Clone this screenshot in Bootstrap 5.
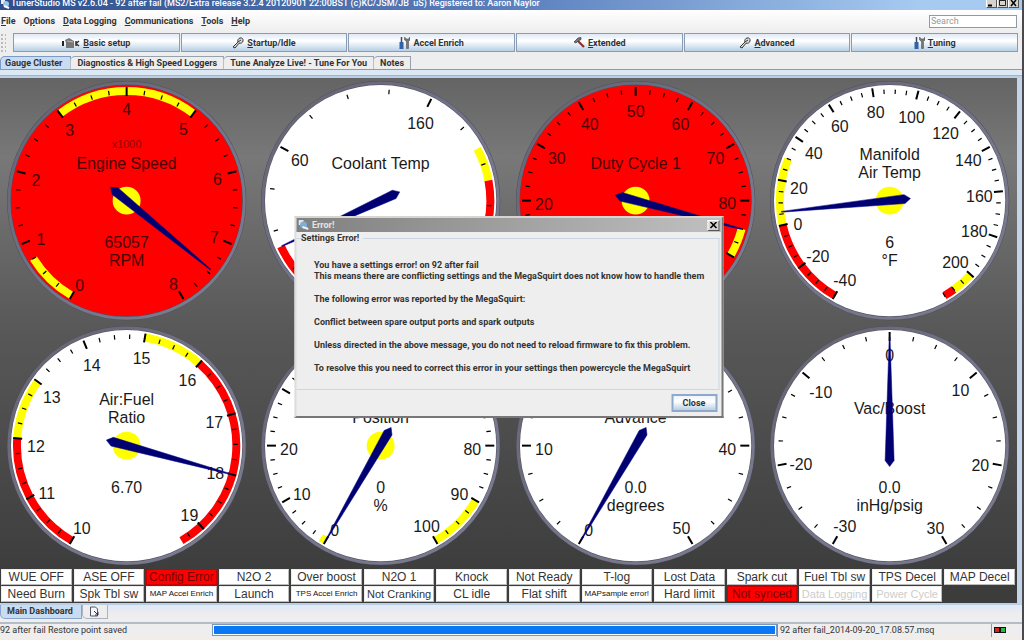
<!DOCTYPE html>
<html lang="en">
<head>
<meta charset="utf-8">
<meta name="viewport" content="width=device-width, initial-scale=1">
<title>TunerStudio MS</title>
<link href="https://cdn.jsdelivr.net/npm/bootstrap@5.3.0/dist/css/bootstrap.min.css" rel="stylesheet">
<style>
body{font:700 9px/12px Roboto,"Liberation Sans",sans-serif;color:#333;background:#eee}
button,input{font:inherit;color:inherit}
.window{min-height:100vh;border-right:2px solid #4a4a4e}
.title-bar{height:10px;background:linear-gradient(90deg,#2f4f8c,#5b7fbd 50%,#a6caf0 90%);color:#fff;padding-right:3px}
.title-bar .caption{font-weight:500;line-height:10px;margin-top:-2px;white-space:pre}
.win-btn{width:11px;height:8px;background:#d6d3ce;border:1px solid #555;border-top:0;border-left-color:#fff;padding:0;line-height:0}
.win-btn svg{display:block;margin:auto}
.menu-bar{height:22px;background:linear-gradient(#fff,#eee);padding:0 5px 0 1px}
.menu-bar a{color:#333;text-decoration:none;margin-right:8px}
.search{width:88px;height:13px;border:1px solid #8f9aa5;background:#fff;padding:0 1px;font-weight:400}
.search::placeholder{color:#999;opacity:1}
.tool-bar{height:22px;padding:1px 4px 2px 0;gap:1px}
.grip{width:12px;background:radial-gradient(#bbb 1px,transparent 1px) 0 0/4px 4px;background-clip:content-box;padding-right:6px}
.tool{height:19px;border:1px solid #8a9bb2;background:linear-gradient(#dfe9f4,#fff 40%,#f4f8fc 50%,#b8cfe5);padding:0;gap:3px}
.tab-row{height:16px;padding-top:2px;border-bottom:1px solid #8a9bb2}
.tab-row button{border:1px solid #98a2ad;border-bottom:0;border-left-color:#b9c0c8;background:#eee;padding:0 6px;border-top-left-radius:5px;height:13px;line-height:12px;margin-left:-1px}
.tab-row button.chosen{background:#c8ddf2;border-color:#7a9ac8;padding:0 8px 0 4px;margin-left:0}
.pane-edge{height:8px;background:linear-gradient(#dde8f5 0 5px,#9fb4cf 5px 6px,#b8cfe5 6px)}
.pane{border-right:5px solid #c4d4e8;border-bottom:2px solid #b8cfe5}
.scene{background:linear-gradient(#646464,#787878 15%,#585858 48%,#3c3c3c 96%)}
.gauge{display:block;width:25%}
.gauge text{font:400 16px "Liberation Sans",sans-serif;text-anchor:middle;fill:#1a1a1a}
.gauge.alarm text{fill:#4a0000}
.gauge text.scale-note{font-size:11px;fill:#9b0000}
.lamps{display:grid;grid-template-columns:repeat(14,1fr);gap:1px 2px;padding:0 2px 1px 1px}
.lamp{height:16px;border:1px solid #ddd;border-color:#eee #bbb #bbb #eee;background:#fff;font:400 12px/14px "Liberation Sans",sans-serif;text-align:center;white-space:nowrap;overflow:hidden;min-width:0}
.lamp.mid{font-size:11px}
.lamp.tiny{font-size:8px;color:#111}
.lamp.on{background:#f00;border-color:#c00;color:#7a0000}
.lamp.off{color:#ccc}
.dialog{position:absolute;left:50%;top:138px;width:429px;transform:translateX(-50%);background:#eee;border:2px solid #d8d5d0;border-right-color:#777;border-bottom-color:#777;border-left-color:#ddd}
.dialog-title{height:14px;background:linear-gradient(90deg,#808080,#c0c0c0);color:#e4e4e4;padding:0 2px 0 2px}
.dialog-title .win-btn{width:12px;height:11px;border-top:1px solid #fff}
.dialog fieldset{border:1px solid #ccd6e2;border-left:0;margin:0 2px 0 0;padding:16px 4px 15px 18px}
.dialog legend{float:none;width:auto;font:inherit;margin:0 0 0 -13px;padding:0 3px 0 0;line-height:12px}
.dialog p{margin:0 0 12px;line-height:11px}
.close-btn{width:46px;height:18px;border:2px solid #8fa9cc;background:linear-gradient(#eef4fa,#fff 40%,#b8cfe5);padding:0;line-height:12px}
.foot-tabs{height:17px;background:linear-gradient(#dfe9f6,#eee 60%)}
.foot-tabs button{height:14px;border:1px solid #aab4c0;border-top:0;background:#eee;border-bottom-left-radius:5px;padding:0 8px 0 6px}
.foot-tabs button.chosen{background:#c8ddf2;border-color:#8aa4cc}
.status{height:15px;border-top:2px solid #b4bcc6;font-weight:400;line-height:12px}
.status .msg{flex:0 0 212px}
.status .bar{height:12px;border:1px solid #7a96b8;border-radius:0;background:#fff;padding:1px}
.status .bar .progress-bar{background:#0a78f5}
.status .file{flex:0 0 214px;border-left:1px solid #888;padding-left:2px}
.status .led{flex:0 0 31px;border-left:1px solid #999;padding-left:2px}
.below{height:3px;background:#f2eee6}
</style>
</head>
<body>
<div class="window d-flex flex-column">
  <header class="title-bar d-flex align-items-start">
    <svg width="11" height="9" viewBox="0 0 11 9" aria-hidden="true"><rect x="1" width="4" height="4" fill="#e8edf4"/><circle cx="6" cy="4" r="3" fill="#9fc4e8"/><path d="M4 6l5 2" stroke="#fff" stroke-width="2"/></svg>
    <span class="caption flex-grow-1">TunerStudio MS v2.6.04 - 92 after fail (MS2/Extra release 3.2.4 20120901 22:00BST (c)KC/JSM/JB  uS) Registered to: Aaron Naylor</span>
    <button class="win-btn" aria-label="Minimize"><svg width="7" height="7"><path d="M0 5.500h4" stroke="#000" stroke-width="2"/></svg></button>
    <button class="win-btn" aria-label="Maximize"><svg width="7" height="7"><path d="M.5 0v5.500h6V0M0 .5h7" stroke="#222" fill="none"/></svg></button>
    <button class="win-btn" aria-label="Close window"><svg width="7" height="7"><path d="M1 0l5 6M6 0L1 6" stroke="#000" stroke-width="1.500"/></svg></button>
  </header>
  <nav class="menu-bar d-flex align-items-center">
    <a href="#"><u>F</u>ile</a><a href="#">O<u>p</u>tions</a><a href="#"><u>D</u>ata Logging</a><a href="#"><u>C</u>ommunications</a><a href="#"><u>T</u>ools</a><a href="#"><u>H</u>elp</a>
    <input class="search ms-auto" type="text" placeholder="Search" aria-label="Search">
  </nav>
  <div class="tool-bar d-flex">
    <span class="grip flex-shrink-0"></span>
    <button class="tool col d-flex align-items-center justify-content-center"><svg width="18" height="12" viewBox="0 0 18 12" aria-hidden="true"><path d="M1 4v5" stroke="#222" stroke-width="2"/><path d="M3 3l4-2 5 3v7H4V6z" fill="#777"/><path d="M5 4l6 1" stroke="#bbb"/><path d="M14 4v5M17 4l-3 2.500 3 2.500" stroke="#333" stroke-width="1.500" fill="none"/></svg><span><u>B</u>asic setup</span></button>
    <button class="tool col d-flex align-items-center justify-content-center"><svg width="12" height="12" viewBox="0 0 12 12" aria-hidden="true"><path d="M1 10l5-5a3 3 0 0 1 2-4c2-.6 3.500 1 3 3-.5 2-2 2.500-4 2.200L3 11z" fill="#ddd" stroke="#333"/><path d="M6 5l3-2" stroke="#333"/></svg><span><u>S</u>tartup/Idle</span></button>
    <button class="tool col d-flex align-items-center justify-content-center"><svg width="11" height="12" viewBox="0 0 11 12" aria-hidden="true"><path d="M2.500 0v5" stroke="#445" stroke-width="1.500"/><path d="M.5 5h4v7h-4z" fill="#2f62a8"/><path d="M5.500 0v3l2 1.500v7h2v-7l1.500-1.500V0L9.500 2h-2z" fill="#777" stroke="#444" stroke-width=".5"/></svg><span>Accel Enrich</span></button>
    <button class="tool col d-flex align-items-center justify-content-center"><svg width="12" height="12" viewBox="0 0 12 12" aria-hidden="true"><path d="M5 4l6 6" stroke="#8c2f2a" stroke-width="2.200"/><path d="M1 5l4-4 3-.5v2L5 4 3 6z" fill="#778" stroke="#333" stroke-width=".7"/></svg><span><u>E</u>xtended</span></button>
    <button class="tool col d-flex align-items-center justify-content-center"><svg width="12" height="12" viewBox="0 0 12 12" aria-hidden="true"><path d="M1 10l5-5a3 3 0 0 1 2-4c2-.6 3.500 1 3 3-.5 2-2 2.500-4 2.200L3 11z" fill="#ddd" stroke="#333"/><path d="M6 5l3-2" stroke="#333"/></svg><span><u>A</u>dvanced</span></button>
    <button class="tool col d-flex align-items-center justify-content-center"><svg width="11" height="12" viewBox="0 0 11 12" aria-hidden="true"><path d="M2.500 0v5" stroke="#445" stroke-width="1.500"/><path d="M.5 5h4v7h-4z" fill="#2f62a8"/><path d="M5.500 0v3l2 1.500v7h2v-7l1.500-1.500V0L9.500 2h-2z" fill="#777" stroke="#444" stroke-width=".5"/></svg><span><u>T</u>uning</span></button>
  </div>
  <div class="tab-row d-flex align-items-end">
    <button class="chosen">Gauge Cluster</button><button>Diagnostics &amp; High Speed Loggers</button><button>Tune Analyze Live! - Tune For You</button><button>Notes</button>
  </div>
  <div class="pane-edge"></div>
  <main class="pane position-relative">
    <div class="scene">
      <div id="gauges" class="d-flex flex-wrap"></div>
      <div class="lamps">
        <div class="lamp">WUE OFF</div><div class="lamp">ASE OFF</div><div class="lamp on">Config Error</div><div class="lamp">N2O 2</div><div class="lamp">Over boost</div><div class="lamp">N2O 1</div><div class="lamp">Knock</div><div class="lamp">Not Ready</div><div class="lamp">T-log</div><div class="lamp">Lost Data</div><div class="lamp">Spark cut</div><div class="lamp">Fuel Tbl sw</div><div class="lamp">TPS Decel</div><div class="lamp">MAP Decel</div>
        <div class="lamp">Need Burn</div><div class="lamp">Spk Tbl sw</div><div class="lamp tiny">MAP Accel Enrich</div><div class="lamp">Launch</div><div class="lamp tiny">TPS Accel Enrich</div><div class="lamp mid">Not Cranking</div><div class="lamp">CL idle</div><div class="lamp">Flat shift</div><div class="lamp tiny">MAPsample error!</div><div class="lamp">Hard limit</div><div class="lamp on">Not synced</div><div class="lamp mid off">Data Logging</div><div class="lamp mid off">Power Cycle</div>
      </div>
    </div>
    <section class="dialog" role="dialog" aria-label="Error!">
      <div class="dialog-title d-flex align-items-center">
        <svg class="me-1" width="10" height="10" viewBox="0 0 10 10" aria-hidden="true"><rect width="5" height="5" fill="#dfe8f2"/><circle cx="5" cy="5" r="3.500" fill="#7faed4"/><path d="M4 7l6 2" stroke="#eef" stroke-width="2"/></svg>
        <span class="flex-grow-1">Error!</span>
        <button class="win-btn" aria-label="Close dialog"><svg width="8" height="7"><path d="M1 0l6 6M7 0L1 6" stroke="#000" stroke-width="1.500"/></svg></button>
      </div>
      <fieldset>
        <legend>Settings Error!</legend>
        <p>You have a settings error! on 92 after fail<br>This means there are conflicting settings and the MegaSquirt does not know how to handle them</p>
        <p>The following error was reported by the MegaSquirt:</p>
        <p>Conflict between spare output ports and spark outputs</p>
        <p>Unless directed in the above message, you do not need to reload firmware to fix this problem.</p>
        <p class="mb-0">To resolve this you need to correct this error in your settings then powercycle the MegaSquirt</p>
      </fieldset>
      <div class="d-flex justify-content-end p-1"><button class="close-btn">Close</button></div>
    </section>
  </main>
  <div class="foot-tabs d-flex">
    <button class="chosen">Main Dashboard</button>
    <button aria-label="New dashboard"><svg width="10" height="11" viewBox="0 0 10 11" aria-hidden="true"><path d="M1.500 1h5l2 2v7h-7z" fill="#f6f6fb" stroke="#556"/><path d="M5 5l4 4M9 6v3H6" stroke="#334" fill="none"/></svg></button>
  </div>
  <footer class="status d-flex">
    <span class="msg">92 after fail Restore point saved</span>
    <div class="progress bar flex-grow-1" role="progressbar" aria-label="Progress" aria-valuenow="100" aria-valuemin="0" aria-valuemax="100"><div class="progress-bar w-100"></div></div>
    <span class="file">92 after fail_2014-09-20_17.08.57.msq</span>
    <span class="led"><svg width="12" height="6" viewBox="0 0 12 6" aria-hidden="true"><rect width="12" height="6" fill="#111"/><rect x="1" y="1" width="4" height="4" fill="#d22"/><rect x="7" y="1" width="4" height="4" fill="#2b4"/></svg></span>
  </footer>
  <div class="below flex-grow-1"></div>
</div>
<script src="https://cdn.jsdelivr.net/npm/bootstrap@5.3.0/dist/js/bootstrap.bundle.min.js"></script>
<script>
// Each gauge sweeps 300 degrees clockwise; labels hold text and the offset from the centre.
const R = 'red', Y = 'yellow';
const gauges = [
  {name:['Engine Speed'], note:'x1000', alarm:true, hub:true, min:0, max:8, major:1, minor:.25, at:7.45, value:'65057', unit:'RPM',
   bands:[[0,.75,Y],[3,5,Y]],
   labels:[['0',-47,85],['1',-86,39],['2',-91,-21],['3',-57,-71],['4',0,-92],['5',57,-72],['6',91,-22],['7',88,37],['8',47,84]]},
  {name:['Coolant Temp'], min:-40, max:300, major:100, minor:25, at:0, bands:[[-40,0,R],[200,220,Y],[220,300,R]],
   labels:[['60',-81,-41],['160',40,-78]]},
  {name:['Duty Cycle 1'], alarm:true, hub:true, min:0, max:100, major:10, minor:2.5, at:85, bands:[[85,90,Y]],
   labels:[['20',-92,3],['30',-79,-43],['40',-46,-77],['50',0,-90],['60',45,-77],['70',80,-43],['80',92,2]]},
  {name:['Manifold','Air Temp'], hub:true, min:-40, max:215, major:20, minor:5, at:6, value:'6', unit:'°F',
   bands:[[-40,0,R],[0,30,Y],[200,210,Y],[210,215,R]],
   labels:[['-40',-45,80],['-20',-72,56],['0',-92,23],['20',-91,-13],['40',-76,-48],['60',-50,-75],['80',-14,-89],['100',22,-84],['120',56,-68],['140',79,-41],['160',90,-5],['180',85,30],['200',66,62]]},
  {name:['Air:Fuel','Ratio'], hub:true, min:10, max:19.4, major:1, minor:.25, at:18, value:'6.70',
   bands:[[10,12,R],[12,13,Y],[15,16,Y],[16,19.4,R]],
   labels:[['10',-45,83],['11',-80,48],['12',-91,0],['13',-75,-49],['14',-35,-81],['15',15,-88],['16',61,-66],['17',88,-24],['18',89,27],['19',63,70]]},
  {name:['','Position'], hub:true, min:0, max:100, major:10, minor:2.5, at:0, value:'0', unit:'%', bands:[[0,1,Y],[90,100,Y]],
   labels:[['0',-46,85],['10',-79,49],['20',-92,3],['80',92,3],['90',79,49],['100',46,81]]},
  {name:['','Advance'], min:0, max:50, major:10, minor:2.5, at:0, value:'0.0', unit:'degrees', bands:[],
   labels:[['0',-47,85],['10',-92,3],['40',92,3],['50',46,83]]},
  {name:['Vac/Boost'], min:-30, max:30, major:10, minor:2.5, at:0, value:'0.0', unit:'inHg/psig', bands:[],
   labels:[['-30',-45,81],['-20',-89,18],['-10',-69,-54],['0',0,-91],['10',71,-56],['20',91,19],['30',46,83]]}
];
function draw(g) {
  const deg = v => -150 + 300 * (v - g.min) / (g.max - g.min);
  const pt = (v, r) => { const a = deg(v) * Math.PI / 180; return (r * Math.sin(a)).toFixed(2) + ' ' + (-r * Math.cos(a)).toFixed(2); };
  const text = (s, x, y) => s ? `<text x="${x}" y="${y + 6}">${s}</text>` : '';
  let s = `<circle r="120" fill="#4f4f5c"/><circle r="118" fill="none" stroke="url(#rim)" stroke-width="3"/><circle r="116" fill="${g.alarm ? '#f00' : '#fff'}"/>`;
  for (const [a, b, c] of g.bands)
    s += `<path d="M${pt(a,110)}A110 110 0 0 1 ${pt(b,110)}" fill="none" stroke="${c}" stroke-width="8"/>`;
  const n = Math.floor((g.max - g.min) / g.minor + .001), every = Math.round(g.major / g.minor);
  for (let i = 0; i <= n; i++) {
    const v = g.min + i * g.minor, big = i % every === 0;
    s += `<path d="M${pt(v, big ? 105 : 107)}L${pt(v, big ? 114 : 111.5)}" stroke="#000" stroke-width="${big ? 2 : 1.2}"/>`;
  }
  if (g.hub) s += '<circle r="14" fill="#ff0"/>';
  for (const [t, x, y] of g.labels) s += text(t, x, y);
  if (g.note) s += `<text class="scale-note" y="-53">${g.note}</text>`;
  g.name.forEach((t, i) => s += text(t, 0, g.name.length > 1 ? -47 + 18 * i : -38));
  s += text(g.value, 0, 42) + text(g.unit, 0, 60);
  s += `<path d="M0 21L4.500 15L.4 -109H-.4L-4.500 15Z" fill="#000070" stroke="#000090" stroke-width=".5" transform="rotate(${deg(g.at).toFixed(1)})"/>`;
  return `<svg class="gauge${g.alarm ? ' alarm' : ''}" viewBox="-127 -123 255 246" role="img" aria-label="${g.name.join(' ')}">
    <defs><linearGradient id="rim" x1="0" y1="0" x2="1" y2="1"><stop offset="0" stop-color="#62626e"/><stop offset=".5" stop-color="#73738a"/><stop offset="1" stop-color="#7d7d90"/></linearGradient></defs>${s}</svg>`;
}
document.getElementById('gauges').innerHTML = gauges.map(draw).join('');
</script>
</body>
</html>
